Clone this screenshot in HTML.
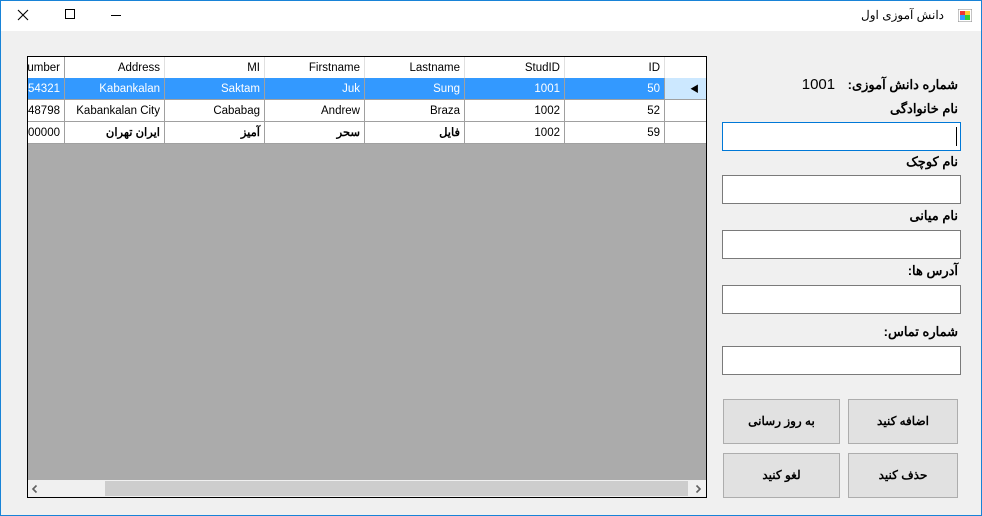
<!DOCTYPE html>
<html><head><meta charset="utf-8"><style>
*{margin:0;padding:0;box-sizing:border-box}
body{width:982px;height:516px;background:#f0f0f0;position:relative;overflow:hidden;font-family:"Liberation Sans","Noto Sans CJK SC",sans-serif;font-size:12px;color:#000}
.win{position:absolute;left:0;top:0;width:982px;height:516px;border:1px solid #1883d7}
.title{position:absolute;left:1px;top:1px;width:980px;height:30px;background:#fff}
.abs{position:absolute}
.grid{position:absolute;left:27px;top:56px;width:680px;height:442px;border:1px solid #000;background:#ababab;overflow:hidden}
.row{position:absolute;left:0;height:22px;width:678px}
.c{position:absolute;top:0;height:22px;line-height:22px;text-align:right;padding-right:4px;border-right:1px solid #a0a0a0;border-bottom:1px solid #a0a0a0;background:#fff;overflow:hidden;white-space:nowrap;font-size:11.5px}
.sel .c{background:#3399ff;color:#fff;border-right-color:#a0a0a0}
.lbl{position:absolute;right:24px;font-size:13px;direction:rtl;font-weight:bold}
.tb{position:absolute;left:722px;width:239px;height:29px;background:#fff;border:1px solid #7a7a7a}
.btn{position:absolute;background:#e1e1e1;border:1px solid #adadad;text-align:center;font-size:12px;font-weight:bold;direction:rtl}
</style></head><body>
<div class="win"></div>
<div class="title"></div>
<svg class="abs" style="left:17px;top:9px" width="12" height="12"><path d="M1 1L11 11M11 1L1 11" stroke="#000" stroke-width="1.1"/></svg>
<div class="abs" style="left:65px;top:9px;width:10px;height:10px;border:1px solid #000"></div>
<div class="abs" style="left:111px;top:15px;width:10px;height:1px;background:#000"></div>
<div class="abs" style="right:38px;top:8px;font-size:12px;direction:rtl">دانش آموزی اول</div>
<svg class="abs" style="left:958px;top:9px" width="14" height="13"><rect x="0" y="0" width="14" height="13" fill="#fff" stroke="#888"/><rect x="2" y="2" width="5" height="4" fill="#e33"/><rect x="7" y="2" width="5" height="4" fill="#fc3"/><rect x="2" y="6" width="5" height="5" fill="#39f"/><rect x="7" y="6" width="5" height="5" fill="#3c3"/></svg>

<div class="grid">
 <div class="row" style="top:0;height:22px">
  <div class="c" style="left:-10px;width:47px;border-bottom:1px solid #ddd">umber</div>
  <div class="c" style="left:37px;width:100px;border-right-color:#e0e0e0;border-bottom-color:#ddd">Address</div>
  <div class="c" style="left:137px;width:100px;border-right-color:#e0e0e0;border-bottom-color:#ddd">MI</div>
  <div class="c" style="left:237px;width:100px;border-right-color:#e0e0e0;border-bottom-color:#ddd">Firstname</div>
  <div class="c" style="left:337px;width:100px;border-right-color:#e0e0e0;border-bottom-color:#ddd">Lastname</div>
  <div class="c" style="left:437px;width:100px;border-right-color:#e0e0e0;border-bottom-color:#ddd">StudID</div>
  <div class="c" style="left:537px;width:100px;border-right-color:#e0e0e0;border-bottom-color:#ddd">ID</div>
  <div class="c" style="left:637px;width:42px;border:none"></div>
 </div>
 <div class="row sel" style="top:21px">
  <div class="c" style="left:-10px;width:47px">654321</div>
  <div class="c" style="left:37px;width:100px">Kabankalan</div>
  <div class="c" style="left:137px;width:100px">Saktam</div>
  <div class="c" style="left:237px;width:100px">Juk</div>
  <div class="c" style="left:337px;width:100px">Sung</div>
  <div class="c" style="left:437px;width:100px">1001</div>
  <div class="c" style="left:537px;width:100px">50</div>
  <div class="c" style="left:637px;width:42px;background:#cce8ff;color:#000;border-right:none;text-align:right;padding-right:8px;font-size:9px">◀</div>
 </div>
 <div class="row" style="top:43px">
  <div class="c" style="left:-10px;width:47px">648798</div>
  <div class="c" style="left:37px;width:100px">Kabankalan City</div>
  <div class="c" style="left:137px;width:100px">Cababag</div>
  <div class="c" style="left:237px;width:100px">Andrew</div>
  <div class="c" style="left:337px;width:100px">Braza</div>
  <div class="c" style="left:437px;width:100px">1002</div>
  <div class="c" style="left:537px;width:100px">52</div>
  <div class="c" style="left:637px;width:42px;border-right:none"></div>
 </div>
 <div class="row" style="top:65px">
  <div class="c" style="left:-10px;width:47px">000000</div>
  <div class="c" style="left:37px;width:100px;font-weight:bold">ایران تهران</div>
  <div class="c" style="left:137px;width:100px;font-weight:bold">آمیز</div>
  <div class="c" style="left:237px;width:100px;font-weight:bold">سحر</div>
  <div class="c" style="left:337px;width:100px;font-weight:bold">فایل</div>
  <div class="c" style="left:437px;width:100px">1002</div>
  <div class="c" style="left:537px;width:100px">59</div>
  <div class="c" style="left:637px;width:42px;border-right:none"></div>
 </div>
 <div class="abs" style="left:0;top:423px;width:678px;height:17px;background:#f0f0f0"></div>
 <div class="abs" style="left:77px;top:424px;width:583px;height:15px;background:#cdcdcd"></div>
 <svg class="abs" style="left:3px;top:427px" width="8" height="10"><path d="M5.5 1.5L2 5L5.5 8.5" stroke="#606060" stroke-width="1.6" fill="none"/></svg>
 <svg class="abs" style="left:666px;top:427px" width="8" height="10"><path d="M2.5 1.5L6 5L2.5 8.5" stroke="#606060" stroke-width="1.6" fill="none"/></svg>
</div>

<div class="abs" style="right:24px;top:76px;font-size:15px;direction:rtl;white-space:nowrap"><b style="font-size:13px">شماره دانش آموزی:</b>&nbsp;&nbsp; 1001</div>
<div class="lbl" style="top:101px">نام خانوادگی</div>
<div class="tb" style="top:122px;border-color:#0078d7"><div class="abs" style="right:3px;top:4px;width:1px;height:19px;background:#000"></div></div>
<div class="lbl" style="top:154px">نام کوچک</div>
<div class="tb" style="top:175px"></div>
<div class="lbl" style="top:208px">نام میانی</div>
<div class="tb" style="top:230px"></div>
<div class="lbl" style="top:263px">آدرس ها:</div>
<div class="tb" style="top:285px"></div>
<div class="lbl" style="top:324px">شماره تماس:</div>
<div class="tb" style="top:346px"></div>

<div class="btn" style="left:723px;top:399px;width:117px;height:45px;line-height:43px">به روز رسانی</div>
<div class="btn" style="left:848px;top:399px;width:110px;height:45px;line-height:43px">اضافه کنید</div>
<div class="btn" style="left:723px;top:453px;width:117px;height:45px;line-height:43px">لغو کنید</div>
<div class="btn" style="left:848px;top:453px;width:110px;height:45px;line-height:43px">حذف کنید</div>
</body></html>
